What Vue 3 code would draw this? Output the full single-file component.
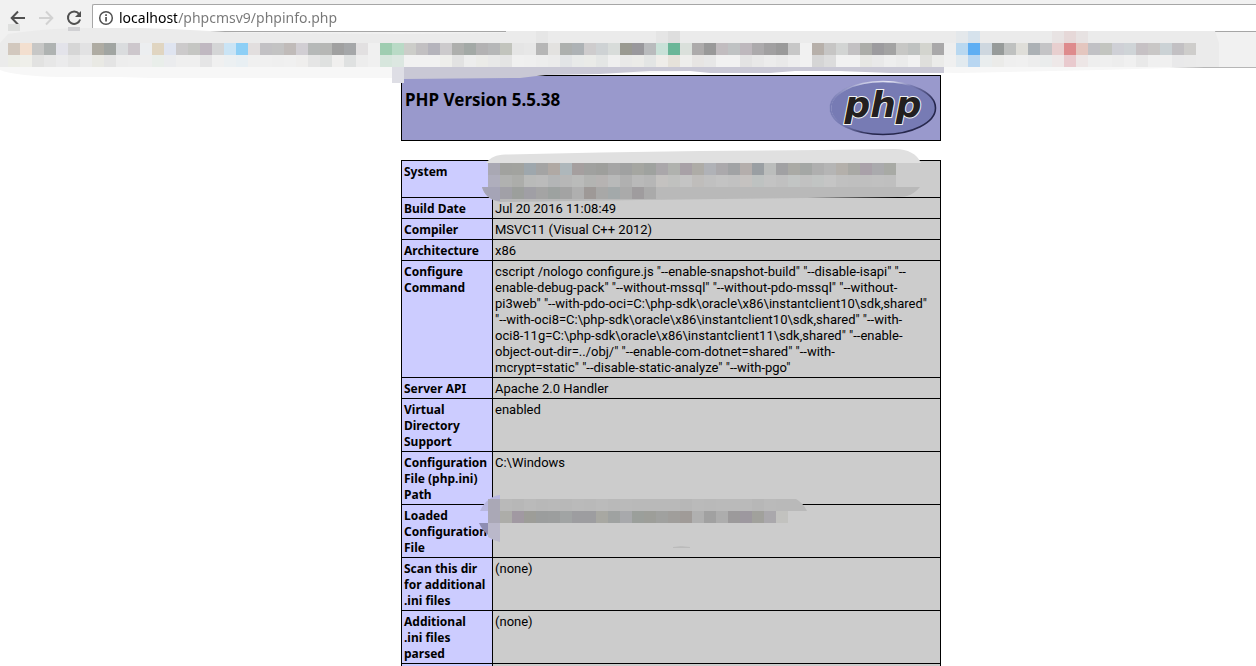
<script setup>
import { ref } from 'vue'

const url = ref('localhost/phpcmsv9/phpinfo.php')

const rows = [
  { name: ['System'], value: ['', ''] },
  { name: ['Build Date'], value: ['Jul 20 2016 11:08:49'] },
  { name: ['Compiler'], value: ['MSVC11 (Visual C++ 2012)'] },
  { name: ['Architecture'], value: ['x86'] },
  {
    name: ['Configure', 'Command'],
    value: [
      'cscript /nologo configure.js "--enable-snapshot-build" "--disable-isapi" "--',
      'enable-debug-pack" "--without-mssql" "--without-pdo-mssql" "--without-',
      'pi3web" "--with-pdo-oci=C:\\php-sdk\\oracle\\x86\\instantclient10\\sdk,shared"',
      '"--with-oci8=C:\\php-sdk\\oracle\\x86\\instantclient10\\sdk,shared" "--with-',
      'oci8-11g=C:\\php-sdk\\oracle\\x86\\instantclient11\\sdk,shared" "--enable-',
      'object-out-dir=../obj/" "--enable-com-dotnet=shared" "--with-',
      'mcrypt=static" "--disable-static-analyze" "--with-pgo"',
    ],
  },
  { name: ['Server API'], value: ['Apache 2.0 Handler'] },
  { name: ['Virtual', 'Directory', 'Support'], value: ['enabled'] },
  { name: ['Configuration', 'File (php.ini)', 'Path'], value: ['C:\\Windows'] },
  { name: ['Loaded', 'Configuration', 'File'], value: [''] },
  { name: ['Scan this dir', 'for additional', '.ini files'], value: ['(none)'] },
  { name: ['Additional', '.ini files', 'parsed'], value: ['(none)'] },
  { name: [''], value: [''] },
]

const CELL = 12
const strip = (x, y, colours) =>
  colours
    .split(' ')
    .map((c, i) => ({ x: x + i * CELL, y, fill: '#' + c }))

const barMosaic = [
  ...strip(8, 43,
    'd2c8be f3dfcf c7c7c6 afb3b2 e3e3ea d6d6d6 e2e2e3 afaca3 a1a5a2 dadcde cdc7cc eceef0 e0d5c1 dfe4f0 cccacb c5c6c3 c0b8c1 d4d5d6 cae4f5 8dcff6 e2dede c2c1c4 c3c3c3 c0bbb9 d1ced3 b6b9b8 b6b7b5 a0a0a0 a5a7a9 e2e0e1 f0f0f0 9fcdb1 b9dac6 cccdc9 c2c0c2 b5b4bc cccacc aeafad a3a9a6 b3b2b3 b6b7b8 c2c4bd e5e5e5 e7e7e7 b6b6b6 e3e2e0 adb0ae adb2b5 cecccd ced2d4 d8dcda 9a9a91 99989c b9bbbd c9e1d8 6bb698 dae0db adabab 999999 c1bcbf bfc2c3 beb8bd acaaac a1a0a1 9a9a9a c7c7c7 f1f1f1 b7b0aa c6c5c4 d2d4d3 c3c1c3 acada9 9c9b9e a3a3a3 c7c7c5 bfc2c1 d3d4ce a9a8a9 eeeeee b9d8f0 5eaef3 ced7df 979b9a bfc1c0 dfded9 acb1b5 c4c4c6 e8cfcf de8b8d e4c6bf c1c1c5 c3c5c0 cfd0d6 cfd4d7 c6c1c4 c9c7c6 cbd2d5 c2c0c3 cecdcb'),
  ...strip(8, 55,
    'ecede7 efefea e2e2e1 e7e7e7 ebebec e6e6e6 ececec e9e9e4 e4e4e4 ededed eeeeee eeeeee e9eeea ebecee efefef efefef e5e5e6 f0f0f0 ecf0f2 e8eff3 f0f0f0 f0f0f0 efefef f0f0f0 efeeed e5e5e5 dfe1e0 f0efee dfe1e1 ededed f0f0f0 d7e6dd dce7e1 f1f1f1 f1f1f1 f1f1f1 eeeeeb e2e2e2 ededed ebebe8 e8e8e8 e4e4e4 f0f0f0 efefef ededed ebebeb e2e4e6 e8eae9 eaebe8 e4e6e5 efefef e9e9e8 ebebe8 e3e5e4 efede9 e6e2da eeeeec e7e5e3 e7e7e7 f1f1f1 f1f1f1 e3e3e3 e8e8e8 ececec e9e9e9 eeeeee f1f1f1 d5d5d5 dcdcdc f1f1f1 f1f1f1 e7e7e4 e9e9e9 eeeeee ebebeb f1f1f1 dfdfdc ebebe9 f0f0f0 e2eaef b8d6f1 e9edee ebebe9 efefef f0f0f0 ededed eaecec eee8e8 e9cace ede6e6 eeeeee efefef ededed f0f0f0 e9e9e9 f0f0f0 f0f0f0 e9e9ea eaeaea'),
  { x: 8, y: 24, h: 7, fill: '#dfe0df' },
  { x: 68, y: 27, h: 4, fill: '#d0d0d3' },
  ...strip(536, 31, 'e6e6e6'),
  ...strip(656, 31, 'e5e5e5 dedede'),
  ...strip(956, 31, 'e4e8eb d6e2ec'),
  ...strip(1052, 31, 'e8e3e3 e6d8d8 e7e2e2'),
]

const systemMosaic = [
  ...strip(488, 163, 'a9a8b3 a1a29f a2a39f 9ea7ad a4a4a4 b0a9a4 aeb7bb a59f9f a0a19f 9e9f9c a5a5a5 a0a1a1 a5a6a1 9fa29f aaa7aa b0b2ae a8a1a7 aeaca7 b0b2b7 aba9ac a1a3a5 b4aeac 9a9fa3 bbbdbc a1a1a3 aaaaa5 a4a7a5 afafaf b5b5b5 b4b0ab a9a9a5 a9a1a9 aaaaad a8aaa5'),
  ...strip(488, 175, 'afaebc b0b1b0 acadaa b9bab9 bbbbbb b3b5b6 b7b7b7 babbba b3b4b2 b6b3b2 b8b9b9 b0b0b0 b9b9b9 b6b6b6 c4c2c0 c0c1bf c4c4c4 bfbdbb c0c0c0 c3c3c3 c1c1c1 c5c2c0 bec2c1 c3c3c3 c0c0c0 c2c5c4 c1c1c1 c1c4c3 c5c5c5 c0c0c0 bfbfbf bfbfbf c0c0c0 bfbfbf'),
  ...strip(500, 187, 'a1a0a7 9c9f9c a09fa5 a4a4a4 9da2a0 a3a3a3 afafaf 9e9997 a8a8a7 a3a9aa aaaaaa 9f9c9e aaaaaa'),
]

const fileMosaic = [
  ...strip(488, 499, 'aaa8b6 b9b9b9 b7b7b7 bababa b8b8b8 b9b9b9 b8b8b8 bababa b9b9b9 bbbbbb b9b9b9 bababa b9b9b9 b9b9b9 b9b9b9 b9b9b9 b7b7b7 bababa b9b9b9 bababa bababa bababa b7b7b7 bababa'),
  ...strip(488, 511, 'aaa8b6 adada9 a199a2 9d9d98 9b9d9d 9c9e9e a1a4a4 9d9da0 9d9da0 a8a8a2 9fa2a1 a8a9ac 9b9f9b 9d9e99 a0a19f a09e9b a09b98 b0b0b0 a1a1a1 adadad 9c9a9b 9d989f a1a19c aaa8ac c2c2bf'),
]
</script>

<template>
  <div class="window">
    <header class="browser">
      <div class="toolbar">
        <nav class="controls">
          <button type="button" aria-label="Back">
            <svg viewBox="0 0 16 16" width="16" height="16"><path d="M15 8H2M8 1.500 1.700 8 8 14.500" fill="none" stroke="#505050" stroke-width="2" /></svg>
          </button>
          <button type="button" aria-label="Forward" disabled>
            <svg viewBox="0 0 16 16" width="16" height="16"><path d="M1 8h13M8 1.500 14.300 8 8 14.500" fill="none" stroke="#d2d2d2" stroke-width="2" /></svg>
          </button>
          <button type="button" aria-label="Reload">
            <svg viewBox="0 0 16 16" width="16" height="16"><path d="M13 3.800A6.200 6.200 0 1 0 14.100 9.500" fill="none" stroke="#505050" stroke-width="2" /><path d="M15 1v6H9z" fill="#505050" /></svg>
          </button>
        </nav>
        <label class="address">
          <svg viewBox="0 0 16 16" width="16" height="16" aria-hidden="true">
            <circle cx="8" cy="8" r="6.300" fill="none" stroke="#505050" stroke-width="1.500" />
            <path d="M7.200 7h1.700v4.600H7.200zM7.200 4.300h1.700V6H7.200z" fill="#505050" />
          </svg>
          <input v-model="url" type="text" aria-label="Address" spellcheck="false" />
        </label>
      </div>
      <div class="bookmarks"></div>
    </header>

    <main class="page">
      <div class="banner">
        <h1>PHP Version 5.5.38</h1>
        <svg class="logo" viewBox="0 0 108 56" width="108" height="56" role="img" aria-label="php logo">
          <defs>
            <linearGradient id="rim" x1="0" y1="0" x2="1" y2="1">
              <stop offset="0" stop-color="#8c8fc0" />
              <stop offset=".28" stop-color="#e6e7f5" />
              <stop offset=".42" stop-color="#7a7db4" />
              <stop offset=".7" stop-color="#23244a" />
              <stop offset="1" stop-color="#2c2d50" />
            </linearGradient>
            <linearGradient id="fade" x1="0" y1="0" x2="1" y2="0">
              <stop offset="0" stop-color="#777bb4" />
              <stop offset=".3" stop-color="#777bb4" stop-opacity="0" />
            </linearGradient>
          </defs>
          <ellipse cx="54" cy="28" rx="52.500" ry="26.500" fill="#777bb4" stroke="url(#rim)" stroke-width="1.600" />
          <ellipse cx="54" cy="28" rx="52.500" ry="26.500" fill="none" stroke="url(#fade)" stroke-width="2" />
          <text x="54" y="37" text-anchor="middle" class="logo-text">php</text>
        </svg>
      </div>

      <table>
        <tbody>
          <tr v-for="(row, r) in rows" :key="r">
            <th scope="row"><span v-for="(line, i) in row.name" :key="i">{{ line }}</span></th>
            <td><span v-for="(line, i) in row.value" :key="i">{{ line }}</span></td>
          </tr>
        </tbody>
      </table>

      <svg class="smudge" viewBox="401 75 540 591" width="540" height="591" aria-hidden="true">
        <path d="M486 163C491 157 496 155 505 154.500L600 152.500 700 151 820 150 895 149C908 149 917 154 921 163Z" fill="#e0e0e0" />
        <path d="M488 163H921V187H488Z" fill="#cccccc" />
        <path d="M482 187H920C914 194 908 197 898 197L720 199 640 200 500 202C489 200 484 194 482 187Z" fill="#b9b9b9" />
        <path d="M482 187H500V201C489 200 484 194 482 187Z" fill="#a5a4b6" />
        <rect v-for="(c, i) in systemMosaic" :key="i" :x="c.x" :y="c.y" width="12" height="12" :fill="c.fill" />
        <path d="M480 511C484 502 491 496 500 495V511Z" fill="#b8b7df" />
        <path d="M479 523H488V535Q482 530 479 523Z" fill="#8e8db3" />
        <path d="M488 523H500V542Q494 541 488 537Z" fill="#bab8ca" />
        <path d="M776 499H796Q803 503 807 511H776Z" fill="#b9b9b9" />
        <rect v-for="(c, i) in fileMosaic" :key="'f' + i" :x="c.x" :y="c.y" width="12" height="12" :fill="c.fill" />
        <path d="M673 547.500Q681 546 690 547.500Z" fill="#b5b5b5" stroke="#bbbbbb" />
      </svg>
    </main>

    <svg class="smudge" viewBox="0 0 1256 90" width="1256" height="90" aria-hidden="true">
      <path d="M0 43 8 34Q50 27 100 28L140 28 170 29 210 31 240 33 400 34 506 33V31H1215L1219 43V67H0Z" fill="#ebebeb" />
      <path d="M0 67H1204L1100 70 960 73 820 71 690 71 650 73 600 74 400 78H150L120 77 60 77Q15 76 0 70Z" fill="#f7f7f7" />
      <path d="M404 67H944V73H890L840 71H795L770 73H710L690 71H650L600 74 545 75 520 78 404 79Z" fill="#c9c8d5" />
      <path d="M392 67H404V83H392Z" fill="#dedee5" />
      <rect v-for="(c, i) in barMosaic" :key="i" :x="c.x" :y="c.y" width="12" :height="c.h || 12" :fill="c.fill" />
    </svg>
  </div>
</template>

<style>
html,
body {
  background: #fff;
}
</style>

<style scoped>
.window {
  position: relative;
  height: 100vh;
  overflow: hidden;
  font-family: "Noto Sans", "Open Sans", sans-serif;
  color: #000;
}
.browser {
  background: #f1f1f1;
  border-bottom: 1px solid #b6b6b6;
}
.toolbar {
  display: flex;
  padding-top: 4px;
}
.controls {
  display: flex;
  gap: 12px;
  width: 82px;
  padding-left: 10px;
}
button {
  display: flex;
  align-items: center;
  width: 16px;
  height: 28px;
  padding: 0;
  border: 0;
  background: none;
}
.address {
  display: flex;
  flex: 1;
  align-items: center;
  gap: 5px;
  height: 26px;
  padding-left: 5px;
  background: #fff;
  border: 1px solid #a6a6a6;
  border-right: 0;
  border-radius: 2px 0 0 2px;
}
input {
  flex: 1;
  height: 24px;
  padding: 0;
  border: 0;
  outline: 0;
  font: 14px/24px "Noto Sans", "Open Sans", sans-serif;
  color: transparent;
  background: linear-gradient(90deg, #000 58px, #777 58px);
  background-clip: text;
  -webkit-background-clip: text;
}
.bookmarks {
  height: 35px;
}
.page {
  position: relative;
  width: 540px;
  margin-top: 7px;
  margin-left: calc(50% - 227px);
}
.banner {
  display: flex;
  justify-content: space-between;
  box-sizing: border-box;
  height: 66px;
  padding: 4px 3px;
  background: #9999cc;
  border: 1px solid #000;
}
h1 {
  margin: 8px 0 0;
  font-size: 17px;
  line-height: 24px;
}
.logo-text {
  font: italic 700 36px "DejaVu Sans", sans-serif;
  fill: #231f20;
  stroke: #f2f2f2;
  stroke-width: 2px;
  paint-order: stroke;
}
table {
  width: 100%;
  margin-top: 19px;
  table-layout: fixed;
  border-collapse: collapse;
  font-size: 12px;
  line-height: 16px;
}
th,
td {
  padding: 3px 2px 1px;
  border: 1px solid #000;
  vertical-align: top;
  text-align: left;
}
th {
  width: 86px;
  background: #ccccff;
}
td {
  font-family: Roboto, "Open Sans", sans-serif;
  font-size: 13px;
  background: #cccccc;
}
th span,
td span {
  display: block;
  min-height: 16px;
  white-space: nowrap;
}
.smudge {
  position: absolute;
  top: 0;
  left: 0;
  pointer-events: none;
}
</style>
